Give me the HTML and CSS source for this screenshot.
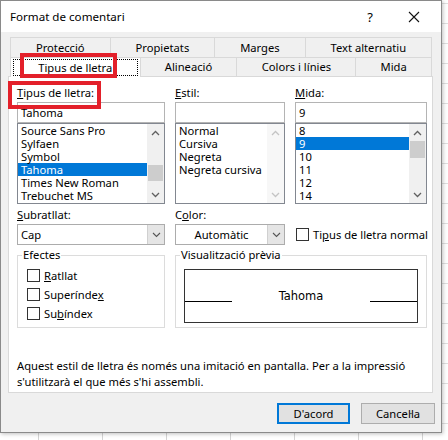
FILE: index.html
```html
<!DOCTYPE html>
<html lang="ca">
<head>
    <meta charset="UTF-8">
    <title>Format de comentari</title>
    <link rel="stylesheet" href="styles.css">
</head>
<body>

    <div class="window">
        <div class="titlebar">
            <span class="title">Format de comentari</span>
            <span class="help">?</span>
            <span class="close">
                <svg width="12" height="12" viewBox="0 0 12 12"><path d="M1 1 L11 11 M11 1 L1 11" stroke="#111" stroke-width="1.1" fill="none"/></svg>
            </span>
        </div>

        <div class="body">
            <div class="tabs">
                <div class="tabrow">
                    <div class="tab">Protecció</div>
                    <div class="tab">Propietats</div>
                    <div class="tab">Marges</div>
                    <div class="tab last">Text alternatiu</div>
                </div>
                <div class="tabrow">
                    <div class="tab selected"><span class="focus">Tipus de lletra</span></div>
                    <div class="tab">Alineació</div>
                    <div class="tab">Colors i línies</div>
                    <div class="tab last">Mida</div>
                </div>
            </div>

            <div class="panel">
                <div class="fields">
                    <!-- font family -->
                    <div class="col">
                        <div class="label"><u>T</u>ipus de lletra:</div>
                        <div class="input">Tahoma</div>
                        <div class="list">
                            <div class="items">
                                <div class="item">Source Sans Pro</div>
                                <div class="item">Sylfaen</div>
                                <div class="item">Symbol</div>
                                <div class="item sel">Tahoma</div>
                                <div class="item">Times New Roman</div>
                                <div class="item">Trebuchet MS</div>
                            </div>
                            <div class="scroll">
                                <div class="arrow"><svg width="9" height="6" viewBox="0 0 9 6"><path d="M1 5 L4.5 1.5 L8 5" stroke="#606060" stroke-width="1.3" fill="none"/></svg></div>
                                <div class="track"><div class="thumb thumb-mid"></div></div>
                                <div class="arrow"><svg width="9" height="6" viewBox="0 0 9 6"><path d="M1 1 L4.5 4.5 L8 1" stroke="#606060" stroke-width="1.3" fill="none"/></svg></div>
                            </div>
                        </div>
                    </div>

                    <!-- style -->
                    <div class="col">
                        <div class="label"><u>E</u>stil:</div>
                        <div class="input"></div>
                        <div class="list">
                            <div class="items">
                                <div class="item">Normal</div>
                                <div class="item">Cursiva</div>
                                <div class="item">Negreta</div>
                                <div class="item">Negreta cursiva</div>
                            </div>
                            <div class="scroll disabled">
                                <div class="arrow"><svg width="9" height="6" viewBox="0 0 9 6"><path d="M1 5 L4.5 1.5 L8 5" stroke="#c4c4c4" stroke-width="1.3" fill="none"/></svg></div>
                                <div class="track"></div>
                                <div class="arrow"><svg width="9" height="6" viewBox="0 0 9 6"><path d="M1 1 L4.5 4.5 L8 1" stroke="#c4c4c4" stroke-width="1.3" fill="none"/></svg></div>
                            </div>
                        </div>
                    </div>

                    <!-- size -->
                    <div class="col">
                        <div class="label"><u>M</u>ida:</div>
                        <div class="input">9</div>
                        <div class="list">
                            <div class="items">
                                <div class="item">8</div>
                                <div class="item sel">9</div>
                                <div class="item">10</div>
                                <div class="item">11</div>
                                <div class="item">12</div>
                                <div class="item">14</div>
                            </div>
                            <div class="scroll">
                                <div class="arrow"><svg width="9" height="6" viewBox="0 0 9 6"><path d="M1 5 L4.5 1.5 L8 5" stroke="#606060" stroke-width="1.3" fill="none"/></svg></div>
                                <div class="track"><div class="thumb"></div></div>
                                <div class="arrow"><svg width="9" height="6" viewBox="0 0 9 6"><path d="M1 1 L4.5 4.5 L8 1" stroke="#606060" stroke-width="1.3" fill="none"/></svg></div>
                            </div>
                        </div>
                    </div>

                    <!-- underline / colour / normal font -->
                    <div class="col">
                        <div class="label label-gap"><u>S</u>ubratllat:</div>
                        <div class="select">
                            <span class="value">Cap</span>
                            <span class="drop"><svg width="9" height="6" viewBox="0 0 9 6"><path d="M1 1 L4.5 4.5 L8 1" stroke="#555" stroke-width="1.1" fill="none"/></svg></span>
                        </div>
                    </div>
                    <div class="col">
                        <div class="label label-gap">C<u>o</u>lor:</div>
                        <div class="select">
                            <span class="value centered">Automàtic</span>
                            <span class="drop"><svg width="9" height="6" viewBox="0 0 9 6"><path d="M1 1 L4.5 4.5 L8 1" stroke="#555" stroke-width="1.1" fill="none"/></svg></span>
                        </div>
                    </div>
                    <div class="col col-bottom">
                        <label class="check"><span class="box"></span>Ti<u>p</u>us de lletra normal</label>
                    </div>

                    <!-- effects and preview -->
                    <fieldset class="group">
                        <legend>Efectes</legend>
                        <label class="check"><span class="box"></span><u>R</u>atllat</label>
                        <label class="check"><span class="box"></span>Superínde<u>x</u></label>
                        <label class="check"><span class="box"></span>Su<u>b</u>índex</label>
                    </fieldset>
                    <fieldset class="group wide">
                        <legend>Visualització prèvia</legend>
                        <div class="preview">
                            <span class="rule"></span>
                            <span class="sample">Tahoma</span>
                            <span class="rule"></span>
                        </div>
                    </fieldset>
                </div>

                <p class="note">Aquest estil de lletra és només una imitació en pantalla. Per a la impressió<br>s'utilitzarà el que més s'hi assembli.</p>
            </div>

            <div class="buttons">
                <button class="btn default">D'acord</button>
                <button class="btn">Cancel·la</button>
            </div>
        </div>

        <!-- red highlight frames -->
        <div class="mark mark-tab"></div>
        <div class="mark mark-label"></div>
    </div>

</body>
</html>
```

FILE: styles.css
```css
body {
    margin: 0;
    width: 448px;
    height: 440px;
    overflow: hidden;
    font-family: "Noto Sans", sans-serif;
    font-size: 11.2px;
    color: #000;
    background-color: #fff;
    background-image:
        linear-gradient(to right, #d4d4d4 1px, transparent 1px),
        linear-gradient(to bottom, #e0e0e0 1px, transparent 1px);
    background-size: 64px 100%, 100% 20px;
    background-position: 38px 0, 0 3px;
}
.window {
    position: relative;
    box-sizing: border-box;
    width: 442px;
    height: 433px;
    border: 1px solid #8a8a8a;
    background: #f0f0f0;
    box-shadow: 1px 1px 4px rgba(0, 0, 0, 0.25);
}
.titlebar {
    display: flex;
    align-items: center;
    height: 31px;
    background: #fff;
    padding-left: 9px;
}
.title {
    flex: 1;
    font-size: 11.6px;
}
.help {
    width: 20px;
    margin-right: 28px;
    font-size: 13px;
    text-align: center;
}
.close {
    display: flex;
    width: 20px;
    margin-right: 13px;
}
.body {
    padding: 5px 8px 8px 7px;
}

/* tabs */
.tabs {
    margin-left: 2px;
    width: 422px;
}
.tabrow {
    display: flex;
}
.tab {
    flex: auto;
    text-align: center;
    height: 19px;
    line-height: 19px;
    border-left: 1px solid #d9d9d9;
    border-top: 1px solid #d9d9d9;
    background: #f0f0f0;
    white-space: nowrap;
}
.tab.last {
    border-right: 1px solid #d9d9d9;
}
.tabrow + .tabrow .tab {
    height: 18px;
    line-height: 18px;
}
.tab.selected {
    position: relative;
    z-index: 1;
    background: #fff;
    margin-bottom: -1px;
    height: 19px;
    padding: 1px 2px 0;
}
.focus {
    display: block;
    border: 1px dotted #000;
    line-height: 15px;
}

/* white sheet */
.panel {
    box-sizing: border-box;
    height: 317px;
    border: 1px solid #d9d9d9;
    background: #fff;
    padding: 8px 8px 0 8px;
}
.fields {
    display: grid;
    grid-template-columns: 148px 110px 132px;
    column-gap: 10px;
}
.col {
    display: flex;
    flex-direction: column;
}
.col-bottom {
    justify-content: flex-end;
}
.label {
    height: 17px;
    line-height: 16px;
}
.label-gap {
    margin-top: 3px;
}
.input {
    box-sizing: border-box;
    height: 21px;
    border: 1px solid #b4b4b4;
    padding-left: 3px;
    line-height: 19px;
}
.list {
    box-sizing: border-box;
    display: flex;
    height: 81px;
    border: 1px solid #828790;
}
.items {
    flex: 1;
    overflow: hidden;
}
.item {
    height: 13px;
    line-height: 13px;
    padding-left: 3px;
    white-space: nowrap;
}
.item.sel {
    background: #0078d7;
    color: #fff;
}
.scroll {
    display: flex;
    flex-direction: column;
    width: 17px;
    background: #f0f0f0;
}
.scroll.disabled {
    background: #f7f7f7;
}
.arrow {
    display: flex;
    align-items: center;
    justify-content: center;
    height: 17px;
}
.track {
    flex: 1;
}
.thumb {
    height: 17px;
    margin: 0 1px;
    background: #cdcdcd;
}
.thumb-mid {
    margin-top: 24px;
    height: 16px;
}

/* drop-down boxes */
.select {
    box-sizing: border-box;
    display: flex;
    height: 21px;
    border: 1px solid #acacac;
    background: #fff;
}
.value {
    flex: 1;
    padding-left: 3px;
    line-height: 19px;
}
.value.centered {
    text-align: center;
    padding-left: 0;
}
.drop {
    display: flex;
    align-items: center;
    justify-content: center;
    width: 16px;
    background: #e5e5e5;
    border-left: 1px solid #d0d0d0;
}

/* check boxes */
.check {
    display: flex;
    align-items: center;
    height: 19px;
    white-space: nowrap;
}
.col-bottom .check {
    height: 21px;
}
.box {
    flex: none;
    box-sizing: border-box;
    width: 13px;
    height: 13px;
    border: 1px solid #333;
    background: #fff;
    margin-right: 4px;
    margin-left: 1px;
}
.group .check {
    margin-left: 4px;
}

/* group frames */
.group {
    box-sizing: border-box;
    margin: 2px 0 0;
    padding: 3px 0 0 4px;
    min-width: 0;
    height: 81px;
    border: 1px solid #dcdcdc;
}
.group legend {
    padding: 0 1px;
    line-height: 16px;
}
.group.wide {
    grid-column: span 2;
    padding: 6px 8px 0 4px;
}
.preview {
    box-sizing: border-box;
    display: flex;
    align-items: center;
    justify-content: space-between;
    height: 54px;
    margin-left: 4px;
    border: 1px solid #333;
}
.rule {
    align-self: flex-end;
    width: 47px;
    height: 1px;
    margin-bottom: 20px;
    background: #000;
}
.sample {
    font-family: "DejaVu Sans", sans-serif;
    font-size: 11.5px;
}

.note {
    margin: 30px 0 0;
    line-height: 16px;
}

/* dialog buttons */
.buttons {
    display: flex;
    justify-content: flex-end;
    gap: 11px;
    margin: 10px -2px 0 0;
}
.btn {
    box-sizing: border-box;
    width: 74px;
    height: 21px;
    padding: 0;
    font-family: inherit;
    font-size: 11.2px;
    background: #e1e1e1;
    border: 1px solid #adadad;
}
.btn.default {
    width: 73px;
    border: 2px solid #0078d7;
}

/* red annotation frames */
.mark {
    position: absolute;
    z-index: 2;
    box-sizing: border-box;
    border: 4px solid #e3202a;
}
.mark-tab {
    left: 19px;
    top: 52px;
    width: 97px;
    height: 25px;
}
.mark-label {
    left: 7px;
    top: 80px;
    width: 93px;
    height: 28px;
}
```
